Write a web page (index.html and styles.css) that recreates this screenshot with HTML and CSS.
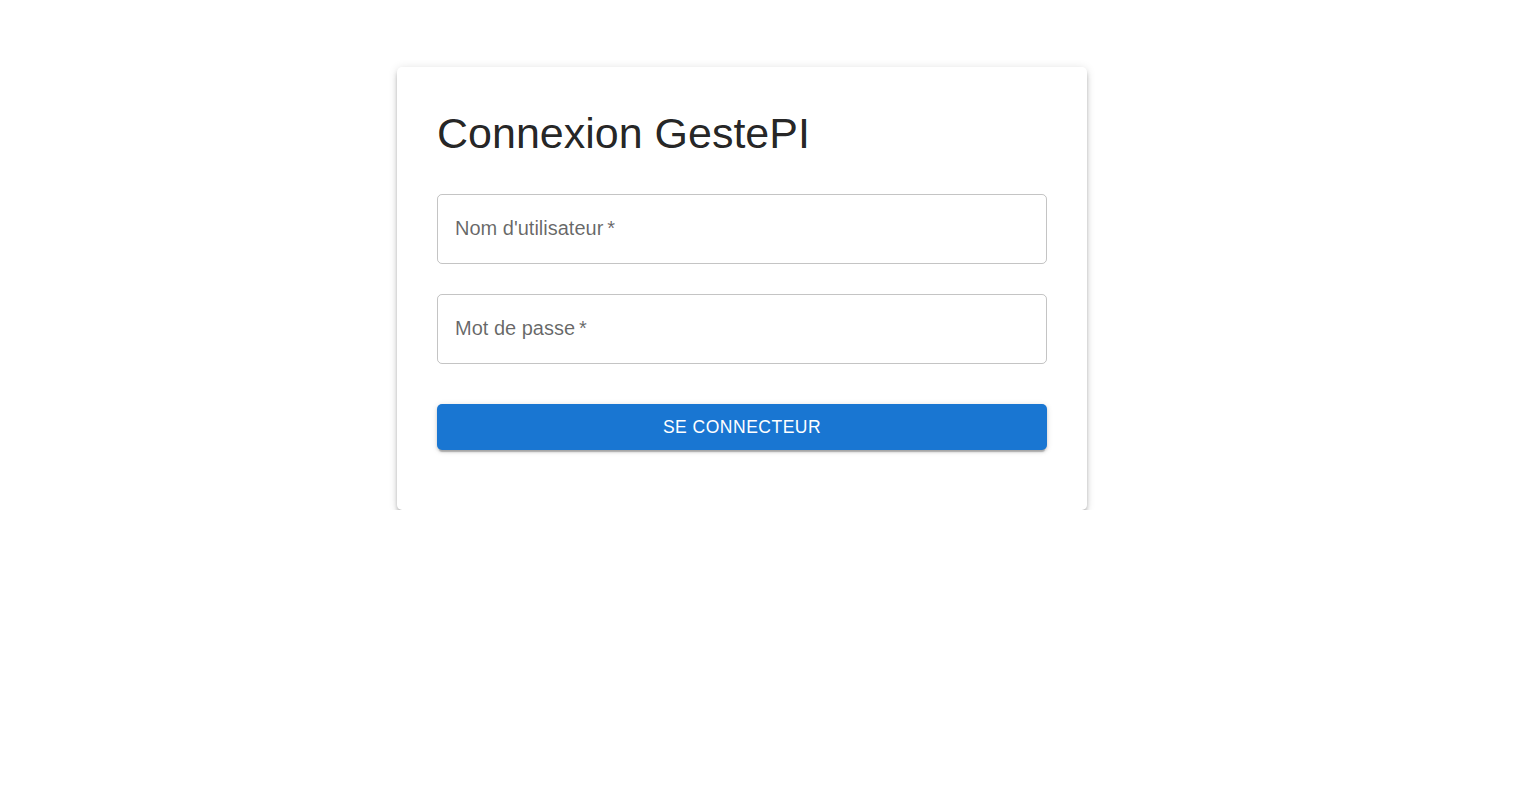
FILE: index.html
```html
<!DOCTYPE html>
<html lang="fr">
<head>
<meta charset="utf-8">
<title>Connexion GestePI</title>
<link rel="stylesheet" href="styles.css">
</head>
<body>
<main class="page">
  <form class="card">
    <h1 class="title">Connexion GestePI</h1>
    <div class="field">
      <label class="label">Nom d'utilisateur&thinsp;*</label>
    </div>
    <div class="field">
      <label class="label">Mot de passe&thinsp;*</label>
    </div>
    <button class="btn" type="button">Se connecteur</button>
  </form>
</main>
</body>
</html>
```
FILE: styles.css
```css
html, body {
  margin: 0;
  padding: 0;
  background: #fff;
  font-family: "Liberation Sans", Arial, Helvetica, sans-serif;
}

.page {
  padding: 67px 0 0 397px;
}

.card {
  box-sizing: border-box;
  width: 690px;
  display: flex;
  flex-direction: column;
  padding: 40px;
  background: #fff;
  border-radius: 5px;
  box-shadow: 0 4px 4px -2px rgba(0,0,0,0.22), 0 4px 5px 0 rgba(0,0,0,0.15), 0 1px 10px 0 rgba(0,0,0,0.12);
}

.title {
  margin: 0 0 15px;
  font-size: 43px;
  font-weight: 400;
  line-height: 52px;
  color: rgba(0,0,0,0.87);
}

.field {
  box-sizing: border-box;
  height: 70px;
  margin: 20px 0 10px;
  border: 1px solid rgba(0,0,0,0.23);
  border-radius: 5px;
  display: flex;
  align-items: center;
  padding: 0 17px 3px;
}

.label {
  font-size: 20px;
  line-height: 24px;
  color: rgba(0,0,0,0.6);
}

.btn {
  display: block;
  width: 100%;
  height: 46px;
  margin: 30px 0 20px;
  border: 0;
  border-radius: 5px;
  background: #1976d2;
  color: #fff;
  font-family: inherit;
  font-size: 17.5px;
  letter-spacing: 0.5px;
  text-transform: uppercase;
  padding: 1px 0 0;
  box-shadow: 0 4px 1px -2px rgba(0,0,0,0.2), 0 2px 3px 0 rgba(0,0,0,0.14), 0 1px 6px 0 rgba(0,0,0,0.12);
  cursor: pointer;
}
```
